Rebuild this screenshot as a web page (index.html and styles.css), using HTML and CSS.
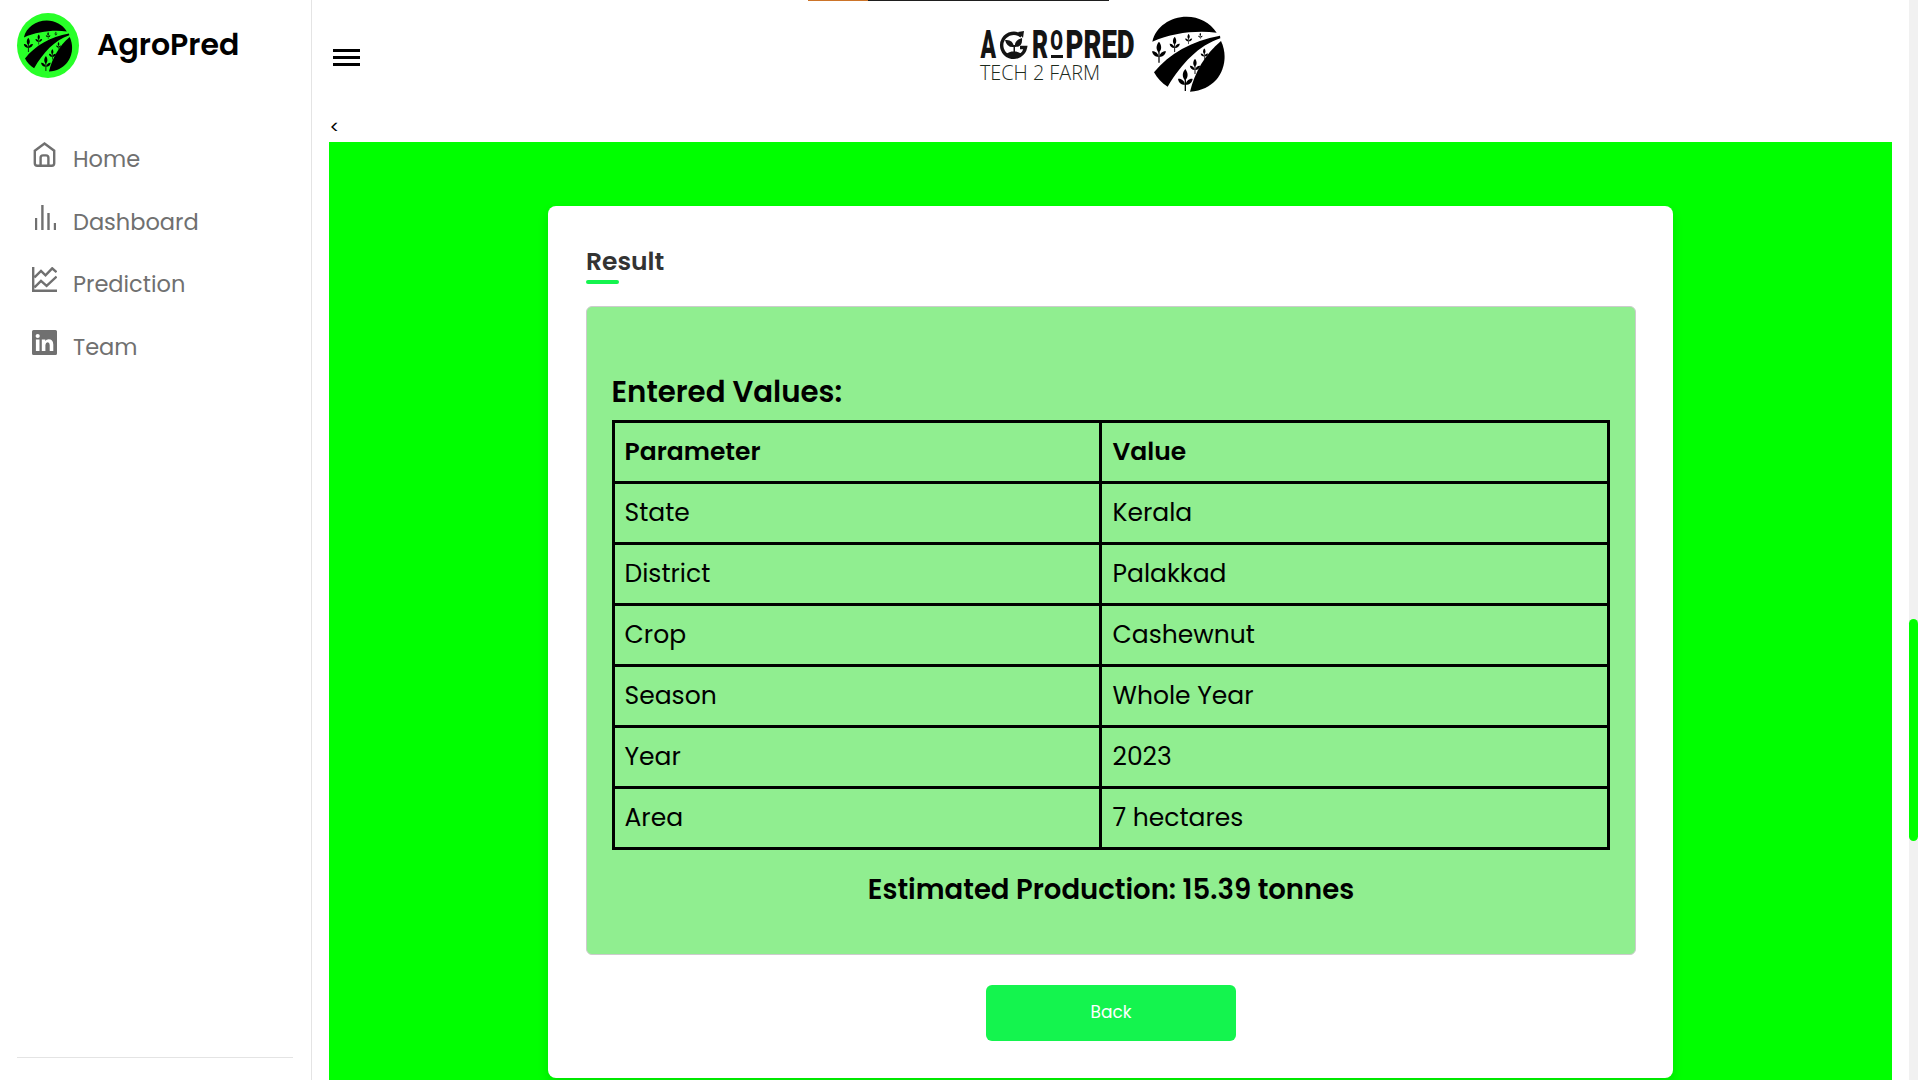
FILE: index.html
```
<!DOCTYPE html>
<html lang="en">
<head>
<meta charset="utf-8">
<title>AgroPred</title>
<link rel="stylesheet" href="styles.css">
</head>
<body>
<svg class="defs" aria-hidden="true">
  <symbol id="sprout" viewBox="0 0 40 60">
    <path d="M20 0C11 10 11 22 19 31C29 24 28 10 20 0ZM0 27C10 26 18 33 19 43C8 43 2 37 0 27ZM40 27C30 26 22 33 21 43C32 43 38 37 40 27Z"/>
    <path d="M18.2 28H21.8V60H18.2Z"/>
  </symbol>
  <symbol id="field" viewBox="0 0 255 255" preserveAspectRatio="none">
    <path d="M22 95C32 50 76 20 125 20C162 20 196 38 215 68C150 61 82 69 22 95Z"/>
    <path d="M27 187C72 131 140 92 225 77L226 85C160 107 111 160 68 230C50 219 37 205 27 187Z"/>
    <path d="M228 93C257 152 228 239 135 245C149 187 180 133 228 93Z"/>
    <use href="#sprout" x="21" y="95" width="42" height="64"/>
    <use href="#sprout" x="73" y="80" width="32" height="47"/>
    <use href="#sprout" x="119" y="71" width="24" height="32"/>
    <use href="#sprout" x="157" y="68" width="18" height="20"/>
    <use href="#sprout" x="98" y="177" width="46" height="66"/>
    <use href="#sprout" x="133" y="146" width="34" height="47"/>
    <use href="#sprout" x="166" y="115" width="24" height="34"/>
  </symbol>
</svg>
<div class="page">
  <aside class="sidebar">
    <div class="brand">
      <span class="badge"><svg class="badge-art"><use href="#field"/></svg></span>
      <span class="brand-name">AgroPred</span>
    </div>
    <ul class="nav">
      <li><svg viewBox="0 0 25 25"><path class="line" d="M2.8 8.7 12.5 1.5 22.2 8.7V21.2Q22.2 23.7 19.8 23.7H5.2Q2.8 23.7 2.8 21.2Z"/><path class="line" d="M8.6 23.5V15.7Q8.6 13.4 11 13.4H14Q16.4 13.4 16.4 15.7V23.5"/></svg><span>Home</span></li>
      <li><svg viewBox="0 0 25 25"><path d="M3 13H5.2V25H3ZM9.2 0H11.6V25H9.2ZM15.3 8H17.7V25H15.3ZM21.8 18H24V25H21.8Z"/></svg><span>Dashboard</span></li>
      <li><svg viewBox="0 0 25 25"><path class="line" d="M1.2 0V23.8H25M2.5 10.3 9 4 13.5 8.3 20.2 1.3 24.5 5.2M2.5 20.3 9 13.8 14.6 18.8 24.6 9.6"/></svg><span>Prediction</span></li>
      <li><svg viewBox="0 0 25 25"><path fill-rule="evenodd" d="M1.5 0H23.5Q25 0 25 1.5V23.5Q25 25 23.5 25H1.5Q0 25 0 23.5V1.5Q0 0 1.5 0ZM3.9 9.6V21.1H7.5V9.6ZM5.7 3.9A2.1 2.1 0 1 0 5.7 8.1A2.1 2.1 0 1 0 5.7 3.9ZM9.8 9.6V21.1H13.4V15Q13.6 12.3 15.7 12.3Q17.6 12.3 17.7 15V21.1H21.3V14.4Q21 9.3 16.6 9.3Q14.3 9.4 13.3 11.1V9.6Z"/></svg><span>Team</span></li>
    </ul>
    <hr class="rule">
  </aside>
  <main class="main">
    <header class="topbar">
      <svg class="menu" viewBox="0 0 27 17"><path d="M0 0H27V3H0ZM0 7H27V10H0ZM0 14H27V17H0Z"/></svg>
      <svg class="wordmark" viewBox="0 0 165 65">
        <g class="wm">
          <text transform="translate(5.5 36) scale(.6 1)">A</text>
          <text transform="translate(57 36) scale(.65 1)">R</text>
          <text class="wm-o" transform="translate(75.3 28.4) scale(.68 1)">O</text>
          <text transform="translate(90.5 36) scale(.725 1)">PRED</text>
          <path d="M76 33H88V36H76Z"/>
        </g>
        <path class="ring" d="M46.5 14.2A12 12 0 1 0 50.5 25.5H45"/>
        <path d="M43 10 49 9 48 16Z"/>
        <path d="M30 18Q38 17 39 25Q32 26 30 18ZM47 16Q48 25 40 25Q39 18 47 16ZM38.5 23H40V31H38.5ZM30 33Q38 26 47 32Q39 40 30 33Z"/>
        <text class="tagline" x="5" y="58" textLength="120" lengthAdjust="spacingAndGlyphs">TECH 2 FARM</text>
      </svg>
      <svg class="emblem"><use href="#field"/></svg>
    </header>
    <div class="stray">&lt;</div>
    <section class="stage">
      <div class="card">
        <h2 class="title">Result</h2>
        <div class="panel">
          <h3 class="entered">Entered Values:</h3>
          <table class="values">
            <colgroup><col class="c-param"><col class="c-value"></colgroup>
            <tr><th>Parameter</th><th>Value</th></tr>
            <tr><td>State</td><td>Kerala</td></tr>
            <tr><td>District</td><td>Palakkad</td></tr>
            <tr><td>Crop</td><td>Cashewnut</td></tr>
            <tr><td>Season</td><td>Whole Year</td></tr>
            <tr><td>Year</td><td>2023</td></tr>
            <tr><td>Area</td><td>7 hectares</td></tr>
          </table>
          <h3 class="estimate">Estimated Production: 15.39 tonnes</h3>
        </div>
        <button class="back">Back</button>
      </div>
    </section>
  </main>
  <div class="scroll"><div class="thumb"></div></div>
  <div class="loading"></div>
</div>
</body>
</html>
```
FILE: styles.css
```
* { box-sizing: border-box; margin: 0; padding: 0; }
body { font-family: Poppins, Inter, sans-serif; color: #000; background: #fff; overflow: hidden; }
.defs { position: absolute; width: 0; height: 0; }
.page { position: relative; display: flex; height: 1080px; overflow: hidden; }

.sidebar { width: 312px; border-right: 1px solid #e4e4e4; display: flex; flex-direction: column; padding: 13px 17px 22px; }
.brand { display: flex; height: 65px; gap: 18px; }
.badge { width: 62px; height: 65px; border-radius: 50%; background: #28ff28; padding: 2.5px 0 0 1.6px; }
.badge-art { display: block; width: 56.7px; height: 57.8px; }
.brand-name { font-size: 30px; font-weight: 600; line-height: 63px; }
.nav { list-style: none; margin-top: 63.9px; padding-left: 15px; flex: 1; color: #707070; font-size: 22.5px; line-height: 33px; }
.nav li { display: flex; align-items: baseline; gap: 16px; height: 33px; margin-bottom: 29.75px; }
.nav svg { width: 25px; height: 25px; fill: #707070; }
.nav .line { fill: none; stroke: #707070; stroke-width: 2.4; }
.rule { border: 0; height: 1px; background: #e4e4e4; width: 276px; }

.main { flex: 1; display: flex; flex-direction: column; padding: 0 17px; }
.topbar { display: flex; height: 112px; padding-left: 4px; }
.menu { width: 27px; height: 17px; margin-top: 49px; }
.wordmark { width: 165px; height: 65px; margin: 22px 0 0 615px; fill: #141414; overflow: visible; }
.wm { font-family: Roboto, sans-serif; font-weight: 900; font-size: 38px; }
.wm-o { font-size: 27px; }
.ring { fill: none; stroke: #141414; stroke-width: 3.4; }
.tagline { font-family: "Open Sans", sans-serif; font-weight: 300; font-size: 20px; fill: #1c2a1c; }
.emblem { width: 85px; height: 85px; margin: 10px 0 0 5px; }
.stray { height: 30px; line-height: 29px; font-size: 18px; padding-left: .5px; }
.stage { flex: 1; background: #0f0; padding-top: 64px; }

.card { width: 1125px; height: 872px; margin: 0 auto; padding: 37px 37px 0 38px; background: #fff; border-radius: 8px; box-shadow: 0 5px 12px rgba(0, 0, 0, .12); display: flex; flex-direction: column; align-items: center; }
.title { align-self: stretch; height: 63px; font-size: 25px; font-weight: 600; line-height: 37px; color: #333; }
.title::after { content: ""; display: block; width: 33px; height: 4px; border-radius: 2px; background: #14f44e; }
.panel { align-self: stretch; height: 649px; border: 1px solid #ccc; border-radius: 6px; background: #90ee90; padding: 62.5px 25px 0; }
.entered { font-size: 29.25px; font-weight: 600; line-height: 44px; height: 50.5px; margin-left: -.5px; }
.values { width: 998px; table-layout: fixed; border-collapse: separate; border-spacing: 0; border-top: 3px solid #000; border-left: 3px solid #000; font-size: 25px; }
.c-param { width: 487px; }
.c-value { width: 508px; }
.values th, .values td { height: 61px; border-right: 3px solid #000; border-bottom: 3px solid #000; text-align: left; padding: 0 0 0 9.5px; font-weight: 400; line-height: 38px; }
.values th { font-weight: 600; }
.values th + th, .values td + td { padding-left: 10.5px; }
.estimate { margin-top: 19px; text-align: center; font-size: 27.5px; font-weight: 600; line-height: 42px; }
.back { width: 250px; height: 56px; margin-top: 30px; padding-bottom: 2px; border: 0; border-radius: 6px; background: #14f44e; color: #fff; font: 400 17px Poppins, Inter, sans-serif; }

.scroll { width: 9px; background: #f1f1f1; padding-top: 619px; }
.thumb { height: 222px; border-radius: 5px; background: #0f0; }
.loading { position: absolute; top: 0; left: 808px; width: 301px; height: 1px; background: linear-gradient(90deg, #cc7429 60px, #1e1e1e 60px); }
```
